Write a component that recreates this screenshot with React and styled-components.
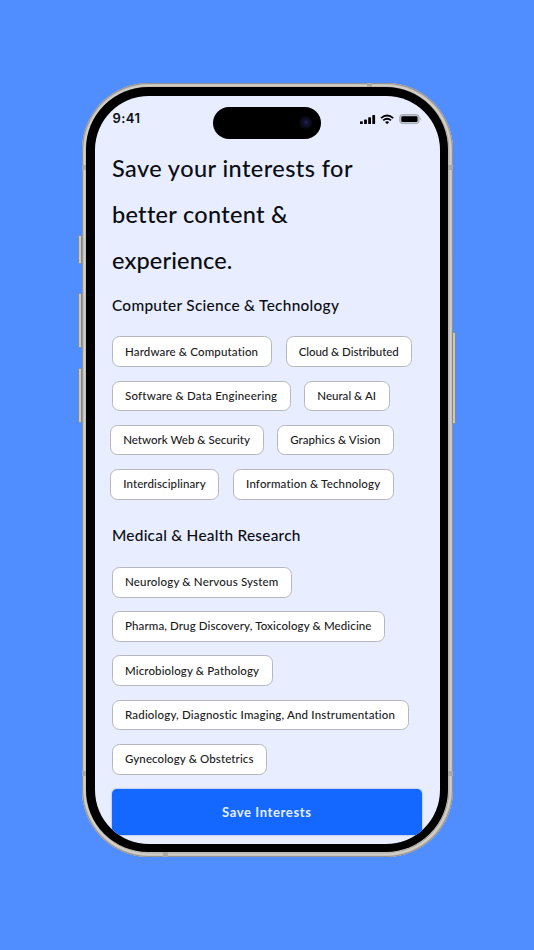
import { useLayoutEffect, useRef, useState } from "react";
import styled, { createGlobalStyle } from "styled-components";

const computerRows = [
  {
    shift: 0,
    chips: [
      { label: "Hardware & Computation", width: 160 },
      { label: "Cloud & Distributed", width: 126.6 },
    ],
  },
  {
    shift: 0,
    chips: [
      { label: "Software & Data Engineering", width: 178.6 },
      { label: "Neural & AI", width: 85.4 },
    ],
  },
  {
    shift: -1.8,
    chips: [
      { label: "Network Web & Security", width: 153.4 },
      { label: "Graphics & Vision", width: 116.8 },
    ],
  },
  {
    shift: -1.8,
    chips: [
      { label: "Interdisciplinary", width: 109.2 },
      { label: "Information & Technology", width: 161 },
    ],
  },
];

const medicalRows = [
  { shift: 0, chips: [{ label: "Neurology & Nervous System", width: 180.2 }] },
  {
    shift: 0,
    chips: [{ label: "Pharma, Drug Discovery, Toxicology & Medicine", width: 273.2 }],
  },
  { shift: 0, chips: [{ label: "Microbiology & Pathology", width: 160.8 }] },
  {
    shift: 0,
    chips: [{ label: "Radiology, Diagnostic Imaging, And Instrumentation", width: 297.2 }],
  },
  { shift: 0, chips: [{ label: "Gynecology & Obstetrics", width: 155.2 }] },
];

// spreads the letters so that the label takes the given width
const Fit = ({ width, children }) => {
  const ref = useRef(null);
  const [spacing, setSpacing] = useState(0);

  useLayoutEffect(() => {
    const natural = ref.current.getBoundingClientRect().width;
    setSpacing((width - natural) / children.length);
  }, []);

  return (
    <Letters ref={ref} style={{ letterSpacing: `${spacing}px` }}>
      {children}
    </Letters>
  );
};

const ChipRows = ({ rows }) => (
  <Rows>
    {rows.map((row, i) => (
      <Row key={i} $shift={row.shift}>
        {row.chips.map((chip) => (
          <Chip key={chip.label} $width={chip.width}>
            <Fit width={chip.width - 26.6}>{chip.label}</Fit>
          </Chip>
        ))}
      </Row>
    ))}
  </Rows>
);

const StatusIcons = () => (
  <Icons width="64" height="12" viewBox="0 0 64 12">
    <rect x="0" y="7.2" width="2.8" height="2.9" rx="0.7" />
    <rect x="4.1" y="5.5" width="2.8" height="4.6" rx="0.7" />
    <rect x="8.2" y="3.3" width="2.8" height="6.8" rx="0.7" />
    <rect x="12.3" y="1" width="2.8" height="9.1" rx="0.7" />
    <g fill="none" stroke="#000" strokeWidth="1.8">
      <path d="M21 4.2 Q27.1 -1.2 33.2 4.2" />
      <path d="M23.2 6.4 Q27.1 3.1 31 6.4" />
    </g>
    <path d="M25 8.1 Q27.1 6.4 29.2 8.1 L27.1 10.2 Z" />
    <rect x="39.7" y="0.6" width="19.4" height="9" rx="2.7" fill="#bfc3ce" stroke="#a4a7b1" strokeWidth="0.9" />
    <rect x="41.3" y="2.2" width="16.2" height="5.8" rx="1.2" />
    <path d="M60.2 3.5 Q61.9 5.1 60.2 6.7 Z" fill="#9da0aa" />
  </Icons>
);

const App = () => {
  return (
    <Stage>
      <GlobalStyle />
      <Phone>
        <SideKey $left $top={152} $height={29} />
        <SideKey $left $top={210} $height={55} />
        <SideKey $left $top={285} $height={55} />
        <SideKey $top={249} $height={92} />
        <Seam $x={285} $y={0} />
        <Seam $x={81} $y={769.7} />
        <Seam $side $x={0} $y={82} />
        <Seam $side $x={366.4} $y={82} />
        <Seam $side $x={0} $y={688} />
        <Seam $side $x={366.4} $y={688} />
        <Bezel>
          <Screen>
            <StatusBar>
              <Time>
                <Fit width={28}>9:41</Fit>
              </Time>
              <Island>
                <Camera />
              </Island>
              <StatusIcons />
            </StatusBar>
            <Content>
              <Title>
                <Fit width={241}>Save your interests for</Fit>
                <Fit width={175.2}>better content &</Fit>
                <Fit width={120.5}>experience.</Fit>
              </Title>
              <Heading>
                <Fit width={227.2}>Computer Science & Technology</Fit>
              </Heading>
              <ChipRows rows={computerRows} />
              <Heading $second>
                <Fit width={188.7}>Medical & Health Research</Fit>
              </Heading>
              <ChipRows rows={medicalRows} />
              <SaveButton>
                <Fit width={89.6}>Save Interests</Fit>
              </SaveButton>
            </Content>
          </Screen>
        </Bezel>
      </Phone>
    </Stage>
  );
};

const GlobalStyle = createGlobalStyle`
  * {
    box-sizing: border-box;
  }
  body {
    margin: 0;
    background: #508eff;
  }
`;

const Stage = styled.main`
  width: 534px;
  height: 950px;
  padding: 82.7px 0 0 81.7px;
  overflow: hidden;
  background: #508eff;
  color: #0b0d12;
  font-family: Lato, "Noto Sans", sans-serif;
`;

const Phone = styled.div`
  position: relative;
  width: 371px;
  height: 774.3px;
  padding: 4.6px;
  border-radius: 67px;
  background: #d5d2cc;
  box-shadow: inset 0 0 1.5px 1px #85847f, inset 0 0 0 3.6px #d5d2cc, inset 0 0 0 4.6px #aaa69f;
`;

const SideKey = styled.div`
  position: absolute;
  ${({ $left }) => ($left ? "left: -3.4px;" : "right: -3px;")}
  top: ${({ $top }) => $top}px;
  width: 3.4px;
  height: ${({ $height }) => $height}px;
  border: 1px solid #85888c;
  border-radius: 1.5px;
  background: #c9c9c6;
`;

const Seam = styled.div`
  position: absolute;
  left: ${({ $x }) => $x}px;
  top: ${({ $y }) => $y}px;
  width: ${({ $side }) => ($side ? 4.6 : 5)}px;
  height: ${({ $side }) => ($side ? 5 : 4.6)}px;
  background: #aaa9a4;
`;

const Bezel = styled.div`
  height: 100%;
  padding: 8.5px;
  border-radius: 62px;
  background: #000;
`;

const Screen = styled.div`
  height: 100%;
  border-radius: 54px;
  background: #e8eeff;
  overflow: hidden;
`;

const StatusBar = styled.div`
  display: grid;
  grid-template-columns: 118px 108.4px 1fr;
  height: 49px;
  padding-top: 11px;
`;

const Letters = styled.span`
  display: inline-block;
  white-space: nowrap;
`;

const Time = styled.div`
  padding: 3px 0 0 17.6px;
  font-family: Inter, sans-serif;
  font-size: 13px;
  font-weight: 600;
  line-height: 17px;
`;

const Island = styled.div`
  display: flex;
  align-items: center;
  justify-content: flex-end;
  height: 31.8px;
  padding-right: 9px;
  border-radius: 16px;
  background: #000;
`;

const Camera = styled.div`
  width: 13px;
  height: 13px;
  border-radius: 50%;
  background: radial-gradient(circle at 55% 50%, #20245c 0, #10122e 25%, #07080f 65%, #030305 100%);
`;

const Icons = styled.svg`
  margin: 7px 0 0 38.6px;
`;

const Content = styled.div`
  width: 309.6px;
  margin-left: 17.2px;
`;

const Title = styled.h1`
  display: flex;
  flex-direction: column;
  align-items: flex-start;
  margin: 0;
  font-size: 23.5px;
  font-weight: 500;
  line-height: 46px;
`;

const Heading = styled.h2`
  margin: ${({ $second }) => ($second ? "25.7px" : "12px")} 0 21.5px;
  font-size: 15.4px;
  font-weight: 500;
  line-height: 20px;
  height: 20px;
`;

const Rows = styled.div`
  display: flex;
  flex-direction: column;
  gap: 13.7px;
`;

const Row = styled.div`
  display: flex;
  gap: 13.7px;
  margin-left: ${({ $shift }) => $shift}px;
`;

const Chip = styled.button`
  display: flex;
  align-items: center;
  flex: none;
  width: ${({ $width }) => $width}px;
  height: 30.6px;
  padding: 0 0 1px 12px;
  border: 1px solid #b5b7bd;
  border-radius: 7.5px;
  background: #fff;
  color: #1b1b1d;
  font-family: inherit;
  font-size: 11.5px;
  font-weight: 500;
`;

const SaveButton = styled.button`
  display: flex;
  align-items: center;
  justify-content: center;
  width: 100%;
  height: 46px;
  margin-top: 14.5px;
  padding: 0;
  border: 0;
  border-radius: 5px 5px 0 0;
  background: #1468ff;
  box-shadow: 0 0 2px #6e8fcf;
  color: #e8f0ff;
  font-family: inherit;
  font-size: 13px;
  font-weight: 700;
`;

export default App;
